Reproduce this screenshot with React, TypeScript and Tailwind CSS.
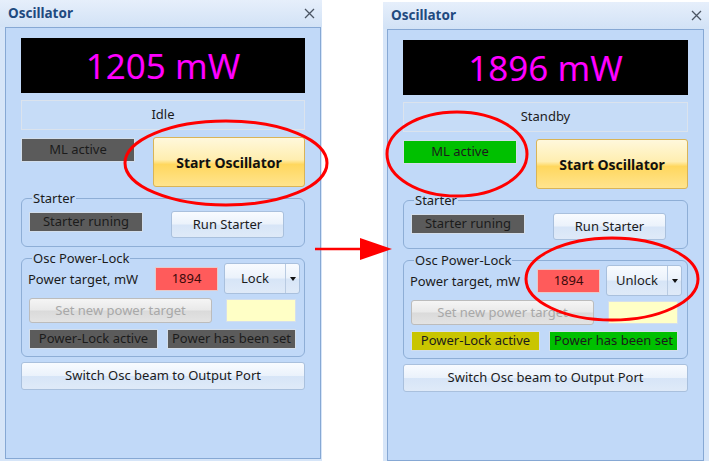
import React from "react";

interface PanelProps {
  power: string;
  status: string;
  mlOn: boolean;
  lockLabel: string;
  lockOn: boolean;
}

const blueBtn =
  "border border-[#a9c0dd] rounded-[3px] bg-[linear-gradient(to_bottom,#f8fbff_0%,#ebf2fb_48%,#d7e5f7_52%,#dfeaf8_100%)] text-[#1b1b1b]";

const CloseIcon = () => (
  <svg width="11" height="11" viewBox="0 0 11 11">
    <path d="M1 1 L10 10 M10 1 L1 10" stroke="#4b5563" strokeWidth="1.3" />
  </svg>
);

const OscPanel = ({ power, status, mlOn, lockLabel, lockOn }: PanelProps) => {
  return (
    <div className="flex-1 border border-[#86a8d4] bg-[#c1d9f8] px-[15px] pt-[10px] flex flex-col text-[13px] text-[#1b1b1b]">
      <div className="h-[55px] bg-black flex items-center justify-center text-[35px] leading-none text-[#ff00ff]">
        {power}
      </div>
      <div className="mt-[7px] h-[30px] border border-[#dbe3ed] bg-[#c6dcf7] flex items-center justify-center">
        {status}
      </div>
      <div className="mt-[7px] flex justify-between items-start">
        <div
          className={`mt-[1px] w-[114px] h-[24px] border border-[#d3deeb] flex items-center justify-center ${
            mlOn ? "bg-[#00c000]" : "bg-[#5b5b5b]"
          }`}
        >
          ML active
        </div>
        <button className="w-[152px] h-[50px] border border-[#d9b457] rounded-[3px] bg-[linear-gradient(to_bottom,#fff8dc_0%,#ffeeb0_45%,#ffd75e_55%,#ffe48e_100%)] font-bold text-[14px] text-[#111]">
          Start Oscillator
        </button>
      </div>

      <fieldset className="mt-[6px] border border-[#8eaed6] rounded-[6px] pl-[7px] pb-[8px]">
        <legend className="ml-[3px] px-[1px] leading-[10px]">Starter</legend>
        <div className="mt-[8px] flex items-start">
          <div className="mt-[1px] w-[114px] h-[20px] bg-[#5b5b5b] border border-[#d3deeb] flex items-center justify-center">
            Starter runing
          </div>
          <button className={`ml-[28px] w-[113px] h-[27px] ${blueBtn}`}>Run Starter</button>
        </div>
      </fieldset>

      <fieldset className="mt-[6px] border border-[#8eaed6] rounded-[6px] pl-[7px] pb-[7px]">
        <legend className="ml-[3px] px-[1px] leading-[10px]">Osc Power-Lock</legend>
        <div className="h-[31px] flex items-center">
          <span className="-ml-[1px] w-[127px] leading-[16px]">Power target, mW</span>
          <div className="w-[63px] h-[24px] bg-[#ff5b5b] border border-[#e7c9c9] flex items-center justify-center text-[#3b0a0a]">
            1894
          </div>
          <div className={`ml-[6px] w-[76px] h-[31px] flex ${blueBtn}`}>
            <span className="flex-1 flex items-center justify-center">{lockLabel}</span>
            <span className="w-[14px] border-l border-[#b9cbe2] flex items-center justify-center">
              <svg width="6" height="4" viewBox="0 0 6 4">
                <path d="M0 0 H6 L3 4 Z" fill="#111" />
              </svg>
            </span>
          </div>
        </div>
        <div className="mt-[4px] flex items-start">
          <button className="w-[183px] h-[25px] border border-[#bcbcbc] rounded-[3px] bg-[linear-gradient(to_bottom,#f5f5f5_0%,#e9e9e9_48%,#dadada_52%,#e3e3e3_100%)] text-[#a8a8a8]">
            Set new power target
          </button>
          <div className="ml-[14px] mt-[1px] w-[70px] h-[23px] bg-[#ffffc6] border border-[#d5dfeb]" />
        </div>
        <div className="mt-[6px] flex gap-[9px]">
          <div
            className={`w-[129px] h-[20px] border border-[#d3deeb] flex items-center justify-center ${
              lockOn ? "bg-[#c9c500]" : "bg-[#5b5b5b]"
            }`}
          >
            Power-Lock active
          </div>
          <div
            className={`w-[129px] h-[20px] border border-[#d3deeb] flex items-center justify-center ${
              lockOn ? "bg-[#00c000]" : "bg-[#5b5b5b]"
            }`}
          >
            Power has been set
          </div>
        </div>
      </fieldset>

      <button className={`mt-[5px] h-[28px] ${blueBtn}`}>Switch Osc beam to Output Port</button>
    </div>
  );
};

const OscWindow = ({ shell, panel, ...props }: PanelProps & { shell: string; panel: string }) => (
  <div className={`h-[461px] bg-[#d6e5f8] flex flex-col ${shell}`}>
    <div className="h-[27px] shrink-0 flex items-center justify-between pl-[8px] pr-[7px] bg-[linear-gradient(to_bottom,#e6effb,#d2e2f6)]">
      <span className="font-bold text-[13.5px] text-[#1f4a7f]">Oscillator</span>
      <CloseIcon />
    </div>
    <div className={`flex-1 flex flex-col mb-[2px] ${panel}`}>
      <OscPanel {...props} />
    </div>
  </div>
);

export default function App() {
  return (
    <div className="relative w-[709px] h-[461px] overflow-hidden bg-white flex font-['Noto_Sans',sans-serif]">
      <OscWindow
        shell="w-[322px]"
        panel="ml-[5px] mr-[1px]"
        power="1205 mW"
        status="Idle"
        mlOn={false}
        lockLabel="Lock"
        lockOn={false}
      />
      <OscWindow
        shell="ml-[61px] mt-[2px] w-[326px]"
        panel="ml-[4px] mr-[5px]"
        power="1896 mW"
        status="Standby"
        mlOn={true}
        lockLabel="Unlock"
        lockOn={true}
      />

      <svg className="absolute inset-0 pointer-events-none" width="709" height="461" viewBox="0 0 709 461">
        <ellipse cx="226" cy="163" rx="101" ry="42" fill="none" stroke="#ff0000" strokeWidth="3" />
        <ellipse cx="457" cy="154" rx="70" ry="42" fill="none" stroke="#ff0000" strokeWidth="3" />
        <ellipse cx="612" cy="279" rx="86" ry="41" fill="none" stroke="#ff0000" strokeWidth="3" />
        <line x1="315" y1="249" x2="364" y2="249" stroke="#ff0000" strokeWidth="2.5" />
        <polygon points="360,238 392,249 360,260" fill="#ff0000" />
      </svg>
    </div>
  );
}
